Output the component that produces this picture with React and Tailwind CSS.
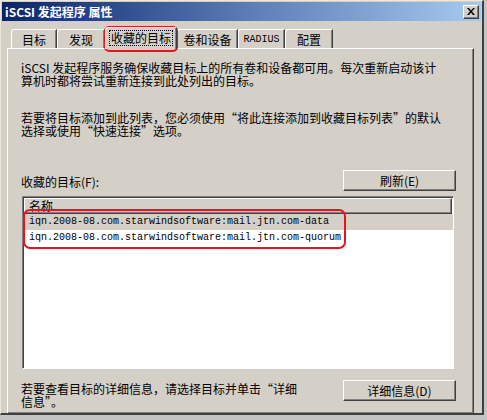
import React from "react"

const cjk = "font-['Noto_Sans_CJK_SC','Noto_Sans_CJK_JP',sans-serif]"
const mono = "font-['Liberation_Mono','DejaVu_Sans_Mono',monospace]"

function Tab({ label, width, selected, isMono }) {
  if (selected) {
    return (
      <div
        className={`relative z-10 -mb-px flex h-[22px] items-start justify-center rounded-tl-[3px] border-l border-t border-white border-r border-r-[#404040] bg-[#d4d0c8] pt-[3px] shadow-[inset_-1px_0_0_#808080] ${width}`}
      >
        <span className="px-px text-[12px] leading-[14px] outline-1 outline-dotted outline-black">{label}</span>
      </div>
    )
  }
  return (
    <div
      className={`flex h-[19px] items-start justify-center rounded-tl-[3px] border-l border-t border-white border-r border-r-[#404040] bg-[#d4d0c8] pt-[3px] shadow-[inset_-1px_0_0_#808080] ${width}`}
    >
      <span className={isMono ? `${mono} text-[10px] leading-[14px]` : "text-[12px] leading-[14px]"}>{label}</span>
    </div>
  )
}

function Button({ children }) {
  return (
    <button className="flex h-[21px] w-[113px] items-center justify-center border border-white border-r-[#404040] border-b-[#404040] bg-[#d4d0c8] text-[12px] leading-none text-black shadow-[inset_-1px_-1px_0_#808080]">
      {children}
    </button>
  )
}

export default function App() {
  const targets = [
    "iqn.2008-08.com.starwindsoftware:mail.jtn.com-data",
    "iqn.2008-08.com.starwindsoftware:mail.jtn.com-quorum",
  ]

  return (
    <div className={`h-[420px] w-[487px] bg-[#c4c4c4] text-black ${cjk}`}>
      <div className="relative h-[415px] w-[484px] overflow-hidden border-l border-t border-[#ece9d8] border-r-2 border-r-[#404040] border-b-2 border-b-[#404040] bg-[#d4d0c8]">
        {/* Title bar */}
        <div className="m-px flex h-[19px] items-center justify-between bg-linear-to-r from-[#0a246a] via-[#5a7ab4] to-[#a6caf0] pl-[3px] pr-[2px]">
          <span className="text-[12px] font-bold leading-none text-white">iSCSI 发起程序 属性</span>
          <div className="flex h-[14px] w-[16px] items-center justify-center border border-white border-r-[#404040] border-b-[#404040] bg-[#d4d0c8] shadow-[inset_-1px_-1px_0_#808080]">
            <svg width="8" height="7" viewBox="0 0 8 7">
              <path d="M0 0h2l2 2.5 2-2.5h2l-3 3.5 3 3.5h-2l-2-2.5-2 2.5h-2l3-3.5z" fill="#000" />
            </svg>
          </div>
        </div>

        {/* Tabs */}
        <div className="ml-[10px] mt-[6px] flex h-[21px] items-end">
          <Tab label="目标" width="w-[46px]" />
          <Tab label="发现" width="w-[48px]" />
          <Tab label="收藏的目标" width="w-[72px]" selected />
          <Tab label="卷和设备" width="w-[61px]" />
          <Tab label="RADIUS" width="w-[47px]" isMono />
          <Tab label="配置" width="w-[48px]" />
        </div>

        {/* Tab panel */}
        <div className="ml-[6px] h-[366px] w-[467px] border border-white border-r-[#404040] border-b-[#404040] pl-[13px] pr-[17px] shadow-[inset_-1px_-1px_0_#808080]">
          <p className="mt-[12px] text-[12px] leading-[13px]">
            iSCSI 发起程序服务确保收藏目标上的所有卷和设备都可用。每次重新启动该计
            <br />
            算机时都将尝试重新连接到此处列出的目标。
          </p>
          <p className="mt-[24px] text-[12px] leading-[13px]">
            若要将目标添加到此列表，您必须使用“将此连接添加到收藏目标列表”的默认
            <br />
            选择或使用“快速连接”选项。
          </p>

          <div className="mt-[33px] flex items-center justify-between">
            <span className="pt-[3px] text-[12px] leading-none">收藏的目标(F):</span>
            <Button>刷新(E)</Button>
          </div>

          {/* List */}
          <div className="relative ml-px mt-[5px] h-[173px] w-[432px] border border-[#808080] border-r-white border-b-white bg-white shadow-[inset_1px_1px_0_#404040]">
            <div className="ml-px mt-px flex h-[16px] w-[428px] items-center border border-white border-r-[#404040] border-b-[#404040] bg-[#d4d0c8] pl-[4px] shadow-[inset_-1px_-1px_0_#808080]">
              <span className="text-[12px] leading-none">名称</span>
            </div>
            {targets.map((t, i) => (
              <div
                key={t}
                className={`ml-px flex h-[16px] w-[429px] items-center pl-[5px] ${mono} text-[10px] leading-none ${i === 0 ? "bg-[#d4d0c8]" : "bg-white"}`}
              >
                {t}
              </div>
            ))}
            <div className="pointer-events-none absolute left-0 top-[12px] h-[40px] w-[323px] rounded-[7px] border-2 border-[#e8141b]" />
          </div>

          <div className="mt-[11px] flex items-start justify-between">
            <p className="mt-[2px] text-[12px] leading-[13px]">
              若要查看目标的详细信息，请选择目标并单击“详细
              <br />
              信息”。
            </p>
            <Button>详细信息(D)</Button>
          </div>
        </div>

        {/* annotation around selected tab */}
        <div className="pointer-events-none absolute left-[103px] top-[25px] h-[26px] w-[74px] rounded-[5px] border-2 border-[#e8141b]" />
      </div>
    </div>
  )
}
